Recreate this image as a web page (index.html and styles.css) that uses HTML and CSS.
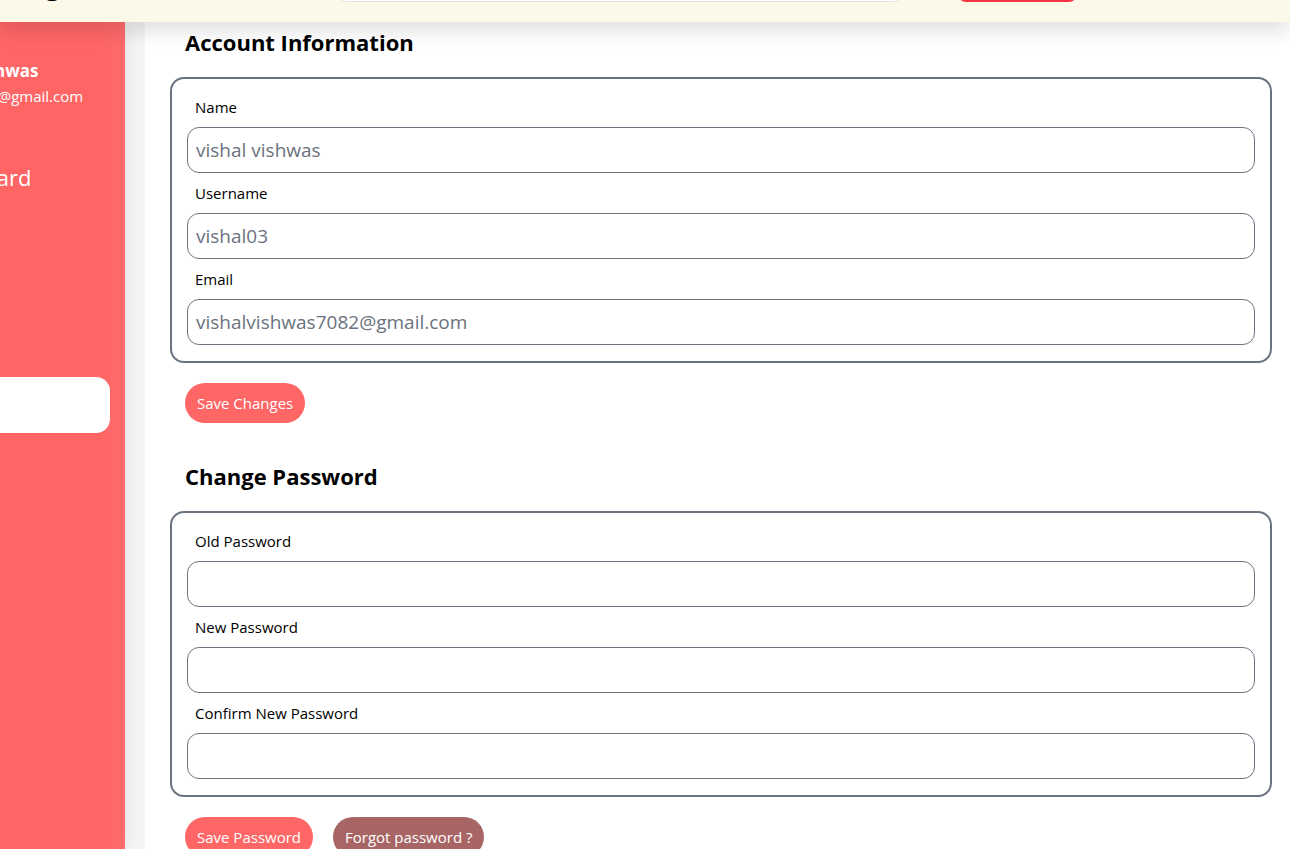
FILE: index.html
```html
<!DOCTYPE html>
<html lang="en">
<head>
<meta charset="utf-8">
<title>Settings</title>
<link rel="stylesheet" href="styles.css">
</head>
<body>
<div class="page">
  <header class="topbar">
    <div class="brand">Blog</div>
    <div class="search"></div>
    <div class="logout"></div>
  </header>
  <div class="layout">
    <aside class="sidebar">
      <div class="profile">
        <div class="profile-name">Vishal Vishwas</div>
        <div class="profile-email">vishalvishwas7082@gmail.com</div>
      </div>
      <nav class="nav">
        <div class="nav-item">Dashboard</div>
        <div class="nav-item nav-item-active">Settings</div>
      </nav>
    </aside>
    <main class="main">
      <h2 class="section-title">Account Information</h2>
      <div class="form-box">
        <div class="field">
          <label class="field-label">Name</label>
          <input class="field-input" type="text" placeholder="vishal vishwas">
        </div>
        <div class="field">
          <label class="field-label">Username</label>
          <input class="field-input" type="text" placeholder="vishal03">
        </div>
        <div class="field">
          <label class="field-label">Email</label>
          <input class="field-input" type="text" placeholder="vishalvishwas7082@gmail.com">
        </div>
      </div>
      <div class="actions">
        <button class="btn btn-primary">Save Changes</button>
      </div>

      <h2 class="section-title section-title-2">Change Password</h2>
      <div class="form-box">
        <div class="field">
          <label class="field-label">Old Password</label>
          <input class="field-input" type="password">
        </div>
        <div class="field">
          <label class="field-label">New Password</label>
          <input class="field-input" type="password">
        </div>
        <div class="field">
          <label class="field-label">Confirm New Password</label>
          <input class="field-input" type="password">
        </div>
      </div>
      <div class="actions">
        <button class="btn btn-primary">Save Password</button>
        <button class="btn btn-muted">Forgot password ?</button>
      </div>
    </main>
  </div>
</div>
</body>
</html>
```

FILE: styles.css
```css
* { box-sizing: border-box; }
html, body {
  margin: 0;
  height: 100%;
  overflow: hidden;
}
body {
  font-family: "Open Sans", "Noto Sans", sans-serif;
  background: #f4f4f4;
  color: #000;
}
.page {
  display: flex;
  flex-direction: column;
  height: 100vh;
}
.topbar {
  height: 22px;
  flex: none;
  background: #fdf9e8;
  display: flex;
  align-items: flex-end;
  overflow: hidden;
  position: relative;
  z-index: 2;
  box-shadow: 0 6px 22px rgba(0, 0, 0, 0.16);
}
.brand {
  font-weight: 700;
  font-size: 28px;
  line-height: 40px;
  margin-bottom: 19px;
  width: 60px;
  text-align: right;
  color: #000;
}
.search {
  width: 570px;
  height: 40px;
  margin-left: 275px;
  margin-bottom: 20px;
  background: #fff;
  border: 1px solid #e2e2e2;
  border-radius: 12px;
}
.logout {
  width: 119px;
  height: 40px;
  margin-left: 53px;
  margin-bottom: 20px;
  background: #f5323f;
  border-radius: 8px;
}
.layout {
  flex: 1;
  display: flex;
  gap: 20px;
  min-height: 0;
}
.sidebar {
  width: 125px;
  flex: none;
  background: linear-gradient(90deg, #ff6565 0%, #ff6565 80%, #ff6c6c 100%);
  overflow: hidden;
  color: #fff;
  box-shadow: 3px 0 12px rgba(0, 0, 0, 0.06);
}
.profile {
  width: 300px;
  margin-left: -174px;
  margin-top: 37px;
  text-align: center;
}
.profile-name {
  font-weight: 700;
  font-size: 17px;
  line-height: 24px;
}
.profile-email {
  font-size: 15px;
  line-height: 22px;
  margin-top: 2px;
}
.nav {
  width: 300px;
  margin-left: -190px;
  margin-top: 50px;
  display: flex;
  flex-direction: column;
  gap: 180px;
}
.nav-item {
  font-size: 22px;
  line-height: 40px;
  padding-left: 108px;
  color: #fff;
}
.nav-item-active {
  height: 56px;
  background: #fff;
  border-radius: 14px;
  color: #fff;
}
.main {
  flex: 1;
  background: #fff;
  padding: 5px 18px 0 25px;
  min-width: 0;
}
.section-title {
  margin: 0 0 20px 15px;
  font-size: 22px;
  line-height: 30px;
  font-weight: 700;
}
.section-title-2 {
  margin-top: 38px;
}
.form-box {
  border: 2px solid #6b7280;
  border-radius: 14px;
  padding: 18px 15px 16px 15px;
  display: flex;
  flex-direction: column;
  gap: 10px;
}
.field {
  display: flex;
  flex-direction: column;
}
.field-label {
  font-size: 15px;
  line-height: 20px;
  margin: 0 0 10px 8px;
}
.field-input {
  height: 46px;
  border: 1px solid #6b7280;
  border-radius: 12px;
  padding: 0 8px;
  font-family: inherit;
  font-size: 19px;
  color: #6b7280;
  background: #fff;
  outline: none;
}
.field-input::placeholder {
  color: #6b7280;
}
.actions {
  display: flex;
  gap: 20px;
  margin: 20px 0 0 15px;
}
.btn {
  height: 40px;
  border: none;
  border-radius: 20px;
  padding: 0 12px;
  font-family: inherit;
  font-size: 15px;
  color: #fff;
}
.btn-primary { background: #ff6666; }
.btn-muted { background: #a86565; }
```
